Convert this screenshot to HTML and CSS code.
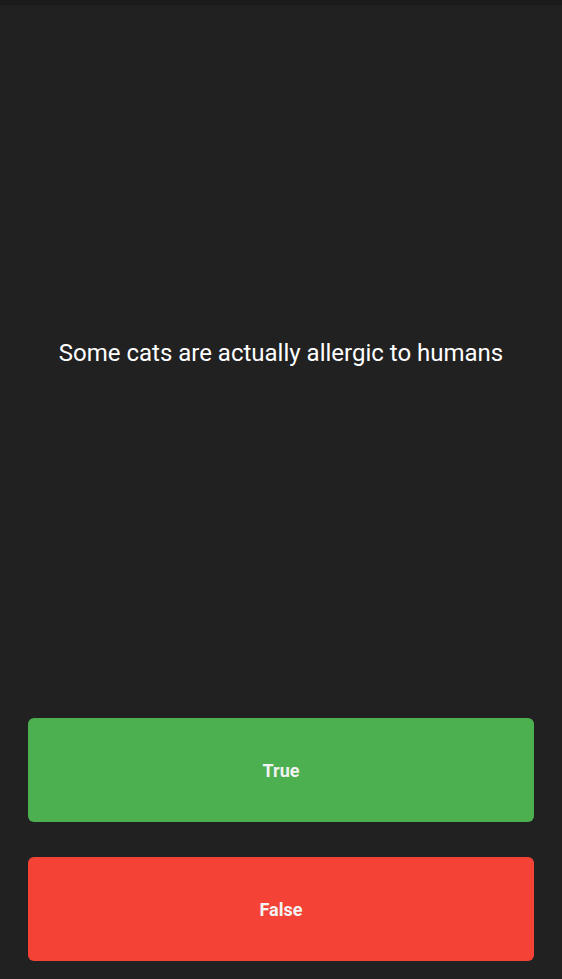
FILE: index.html
```html
<!DOCTYPE html>
<html lang="en">
<head>
<meta charset="utf-8">
<title>Quiz</title>
<link rel="stylesheet" href="styles.css">
</head>
<body>
<div class="app">
  <div class="statusbar"></div>
  <main class="question">
    <p class="question-text">Some cats are actually allergic to humans</p>
  </main>
  <div class="answers">
    <button class="answer answer-true">True</button>
    <button class="answer answer-false">False</button>
  </div>
</div>
</body>
</html>
```
FILE: styles.css
```css
html, body {
  margin: 0;
  padding: 0;
  background: #212121;
}
.app {
  height: 979px;
  display: flex;
  flex-direction: column;
  font-family: Roboto, "Noto Sans", sans-serif;
}
.statusbar {
  height: 5px;
  background: #1b1b1b;
}
.question {
  flex: 1;
  display: flex;
  align-items: center;
  justify-content: center;
  padding: 0 20px 4px;
}
.question-text {
  margin: 0;
  color: #ffffff;
  font-size: 24px;
  text-align: center;
}
.answers {
  display: flex;
  flex-direction: column;
  gap: 35px;
  padding: 14px 28px 18px;
}
.answer {
  height: 104px;
  border: none;
  border-radius: 6px;
  font-family: Roboto, "Noto Sans", sans-serif;
  font-weight: 700;
  font-size: 18px;
  color: #f2f2f2;
}
.answer-true {
  background: #4caf50;
}
.answer-false {
  background: #f44336;
}
```
